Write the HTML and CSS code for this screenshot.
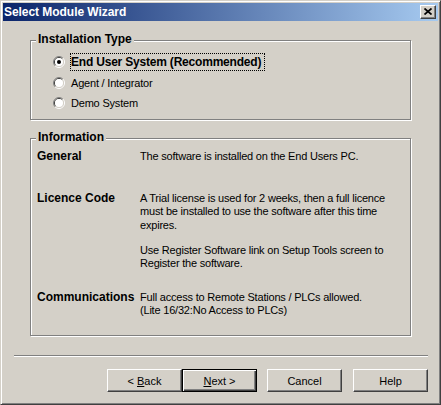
FILE: index.html
```html
<!DOCTYPE html>
<html lang="en">
<head>
    <meta charset="UTF-8">
    <title>Select Module Wizard</title>
    <link rel="stylesheet" href="styles.css">
</head>
<body>
    <div class="window">
        <div class="titlebar">
            <span class="title">Select Module Wizard</span>
            <span class="closeBtn">
                <svg width="8" height="7" viewBox="0 0 8 7"><path d="M0.5 0.5L7.5 6.5M7.5 0.5L0.5 6.5" stroke="#000" stroke-width="1.7"/></svg>
            </span>
        </div>

        <div class="client">
            <!-- Installation Type -->
            <div class="group groupType">
                <div class="groupTitle"><span>Installation Type</span></div>
                <div class="options">
                    <div class="option">
                        <svg class="radio" width="12" height="12" viewBox="0 0 12 12">
                            <path d="M2.1 9.9A5.5 5.5 0 0 1 9.9 2.1" stroke="#808080" fill="none"/>
                            <path d="M9.9 2.1A5.5 5.5 0 0 1 2.1 9.9" stroke="#fff" fill="none"/>
                            <path d="M2.8 9.2A4.5 4.5 0 0 1 9.2 2.8" stroke="#404040" fill="none"/>
                            <path d="M9.2 2.8A4.5 4.5 0 0 1 2.8 9.2" stroke="#d4d0c8" fill="none"/>
                            <circle cx="6" cy="6" r="4" fill="#fff"/>
                            <circle cx="6" cy="6" r="2" fill="#000"/>
                        </svg>
                        <span class="optLabel focused">End User System (Recommended)</span>
                    </div>
                    <div class="option">
                        <svg class="radio" width="12" height="12" viewBox="0 0 12 12">
                            <path d="M2.1 9.9A5.5 5.5 0 0 1 9.9 2.1" stroke="#808080" fill="none"/>
                            <path d="M9.9 2.1A5.5 5.5 0 0 1 2.1 9.9" stroke="#fff" fill="none"/>
                            <path d="M2.8 9.2A4.5 4.5 0 0 1 9.2 2.8" stroke="#404040" fill="none"/>
                            <path d="M9.2 2.8A4.5 4.5 0 0 1 2.8 9.2" stroke="#d4d0c8" fill="none"/>
                            <circle cx="6" cy="6" r="4" fill="#fff"/>
                        </svg>
                        <span class="optLabel">Agent / Integrator</span>
                    </div>
                    <div class="option">
                        <svg class="radio" width="12" height="12" viewBox="0 0 12 12">
                            <path d="M2.1 9.9A5.5 5.5 0 0 1 9.9 2.1" stroke="#808080" fill="none"/>
                            <path d="M9.9 2.1A5.5 5.5 0 0 1 2.1 9.9" stroke="#fff" fill="none"/>
                            <path d="M2.8 9.2A4.5 4.5 0 0 1 9.2 2.8" stroke="#404040" fill="none"/>
                            <path d="M9.2 2.8A4.5 4.5 0 0 1 2.8 9.2" stroke="#d4d0c8" fill="none"/>
                            <circle cx="6" cy="6" r="4" fill="#fff"/>
                        </svg>
                        <span class="optLabel">Demo System</span>
                    </div>
                </div>
            </div>

            <!-- Information -->
            <div class="group groupInfo">
                <div class="groupTitle"><span>Information</span></div>
                <div class="infoRow rowGeneral">
                    <div class="infoLabel">General</div>
                    <div class="infoText">The software is installed on the End Users PC.</div>
                </div>
                <div class="infoRow rowLicence">
                    <div class="infoLabel">Licence Code</div>
                    <div class="infoText">
                        <p>A Trial license is used for 2 weeks, then a full licence<br>must be installed to use the software after this time<br>expires.</p>
                        <p class="second">Use Register Software link on Setup Tools screen to<br>Register the software.</p>
                    </div>
                </div>
                <div class="infoRow rowComms">
                    <div class="infoLabel">Communications</div>
                    <div class="infoText">Full access to Remote Stations / PLCs allowed.<br>(Lite 16/32:No Access to PLCs)</div>
                </div>
            </div>

            <div class="separator"></div>

            <div class="buttons">
                <button class="btn">&lt; <u>B</u>ack</button>
                <button class="btn default"><u>N</u>ext &gt;</button>
                <button class="btn gapLeft">Cancel</button>
                <button class="btn gapLeftWide">Help</button>
            </div>
        </div>
    </div>
</body>
</html>
```

FILE: styles.css
```css
body {
    margin: 0;
    font-family: "Liberation Sans", Arial, sans-serif;
    font-size: 11px;
    color: #000;
}

.window {
    width: 441px;
    height: 405px;
    box-sizing: border-box;
    background-color: #d4d0c8;
    border: 1px solid;
    border-color: #d4d0c8 #404040 #404040 #d4d0c8;
    box-shadow: inset 1px 1px 0 #fff, inset -1px -1px 0 #808080;
    padding: 2px;
}

.titlebar {
    height: 18px;
    display: flex;
    align-items: center;
    justify-content: space-between;
    padding: 0 2px 0 1px;
    background: linear-gradient(to right, #0a246a, #a6caf0);
}

.title {
    color: #fff;
    font-weight: bold;
    font-size: 12px;
    letter-spacing: -0.05px;
}

.closeBtn {
    width: 16px;
    height: 14px;
    box-sizing: border-box;
    display: flex;
    align-items: center;
    justify-content: center;
    background-color: #d4d0c8;
    border: 1px solid;
    border-color: #fff #404040 #404040 #fff;
    box-shadow: inset -1px -1px 0 #808080;
    padding-bottom: 1px;
}

.closeBtn svg {
    display: block;
}

.client {
    padding: 19px 10px 0 11px;
}

/* Etched group boxes */
.group {
    margin: 0 17px 0 16px;
    border: 1px solid #808080;
    box-shadow: 1px 1px 0 #fff, inset 1px 1px 0 #fff;
}

.groupTitle {
    margin-top: -8px;
    height: 13.5px;
    line-height: 13.5px;
}

.groupTitle span {
    display: inline-block;
    margin-left: 5px;
    padding: 0 2px;
    background-color: #d4d0c8;
    font-weight: bold;
    font-size: 12px;
}

.groupType {
    padding-bottom: 5.5px;
}

.options {
    margin-top: 5.5px;
    padding-left: 22px;
}

.option {
    height: 20.5px;
    display: flex;
    align-items: center;
}

.radio {
    display: block;
    margin-right: 5px;
}

.optLabel {
    line-height: 16px;
    border: 1px solid transparent;
    padding-right: 3px;
    letter-spacing: -0.2px;
}

.optLabel.focused {
    border: 1px dotted #000;
    font-weight: bold;
    font-size: 12px;
}

.groupInfo {
    margin-top: 18px;
    padding-bottom: 17.5px;
}

.infoRow {
    display: grid;
    grid-template-columns: 103px 1fr;
    margin-left: 6px;
    line-height: 13.5px;
}

.rowGeneral {
    margin-top: 5px;
}

.rowLicence {
    margin-top: 28.5px;
}

.rowComms {
    margin-top: 20px;
}

.infoLabel {
    font-weight: bold;
    font-size: 12px;
    white-space: nowrap;
}

.infoText {
    letter-spacing: -0.2px;
}

.infoText p {
    margin: 0;
}

.infoText p.second {
    margin-top: 11.5px;
}

.separator {
    margin-top: 19px;
    border-top: 1px solid #808080;
    border-bottom: 1px solid #fff;
}

.buttons {
    margin-top: 12px;
    display: flex;
    justify-content: flex-end;
}

.btn {
    width: 75px;
    height: 23px;
    box-sizing: border-box;
    margin: 0;
    padding: 0;
    font-family: "Liberation Sans", Arial, sans-serif;
    font-size: 11px;
    color: #000;
    background-color: #d4d0c8;
    border: 1px solid;
    border-color: #fff #404040 #404040 #fff;
    box-shadow: inset -1px -1px 0 #808080;
    border-radius: 0;
}

.btn.default {
    border: 1px solid #000;
    box-shadow: inset 1px 1px 0 #fff, inset -1px -1px 0 #404040, inset -2px -2px 0 #808080;
}

.btn.gapLeft {
    margin-left: 10px;
}

.btn.gapLeftWide {
    margin-left: 11px;
}
```
